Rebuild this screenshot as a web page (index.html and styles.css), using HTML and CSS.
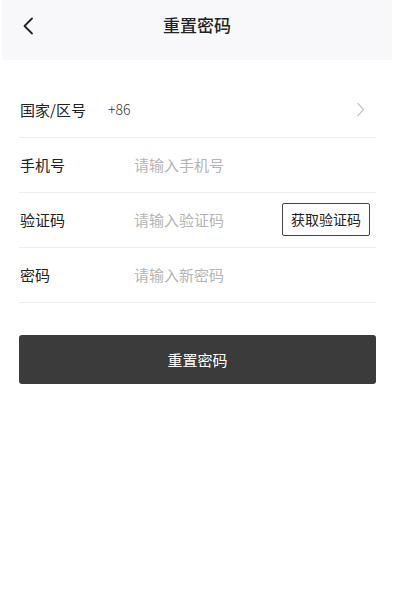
FILE: index.html
```html
<!DOCTYPE html>
<html lang="zh-CN">
<head>
<meta charset="utf-8">
<link rel="stylesheet" href="styles.css">
</head>
<body>
<div class="page">
  <header class="nav">
    <span class="back">
      <svg width="12" height="18" viewBox="0 0 12 18"><path d="M10 1.5 L2.5 9 L10 16.5" fill="none" stroke="#222" stroke-width="1.8" stroke-linecap="round" stroke-linejoin="round"/></svg>
    </span>
    <h1 class="title">重置密码</h1>
  </header>
  <form class="form">
    <div class="row">
      <span class="label label-short">国家/区号</span>
      <span class="value">+86</span>
      <svg class="arrow" width="9" height="15" viewBox="0 0 9 15"><path d="M1.5 1 L7.5 7.5 L1.5 14" fill="none" stroke="#c4c4c4" stroke-width="1.2"/></svg>
    </div>
    <div class="row">
      <span class="label">手机号</span>
      <span class="placeholder">请输入手机号</span>
    </div>
    <div class="row">
      <span class="label">验证码</span>
      <span class="placeholder">请输入验证码</span>
      <span class="code-btn">获取验证码</span>
    </div>
    <div class="row">
      <span class="label">密码</span>
      <span class="placeholder">请输入新密码</span>
    </div>
    <div class="submit">重置密码</div>
  </form>
</div>
</body>
</html>
```

FILE: styles.css
```css
* { box-sizing: border-box; margin: 0; padding: 0; }
html, body { background: #fff; }
body {
  font-family: "Noto Sans CJK SC", "Noto Sans", sans-serif;
  color: #222;
  width: 394px;
}
.page { padding: 0 2px; }
.nav {
  height: 60px;
  background: #f8f8fa;
  display: flex;
  align-items: center;
  justify-content: center;
  position: relative;
}
.back {
  position: absolute;
  left: 20px;
  top: 17px;
  display: flex;
}
.title {
  font-size: 17px;
  font-weight: 500;
  color: #222;
  margin-top: -11px;
}
.form {
  padding: 23px 16px 0 17px;
}
.row {
  height: 55px;
  padding-bottom: 2px;
  border-bottom: 1px solid #ececec;
  display: flex;
  align-items: center;
  font-size: 15px;
}
.label {
  width: 115px;
  padding-left: 1px;
  color: #222;
}
.label-short { width: 89px; }
.value { color: #333; flex: 1; font-size: 14px; font-weight: 300; }
.placeholder { color: #b5b5b5; flex: 1; }
.arrow { margin-right: 11px; }
.code-btn {
  height: 33px;
  width: 88px;
  border: 1px solid #444;
  border-radius: 2px;
  font-size: 14px;
  color: #222;
  display: flex;
  align-items: center;
  justify-content: center;
  margin-right: 6px;
}
.submit {
  margin-top: 32px;
  height: 49px;
  background: #3b3b3b;
  border-radius: 3px;
  color: #fff;
  font-size: 15px;
  display: flex;
  align-items: center;
  justify-content: center;
}
```
